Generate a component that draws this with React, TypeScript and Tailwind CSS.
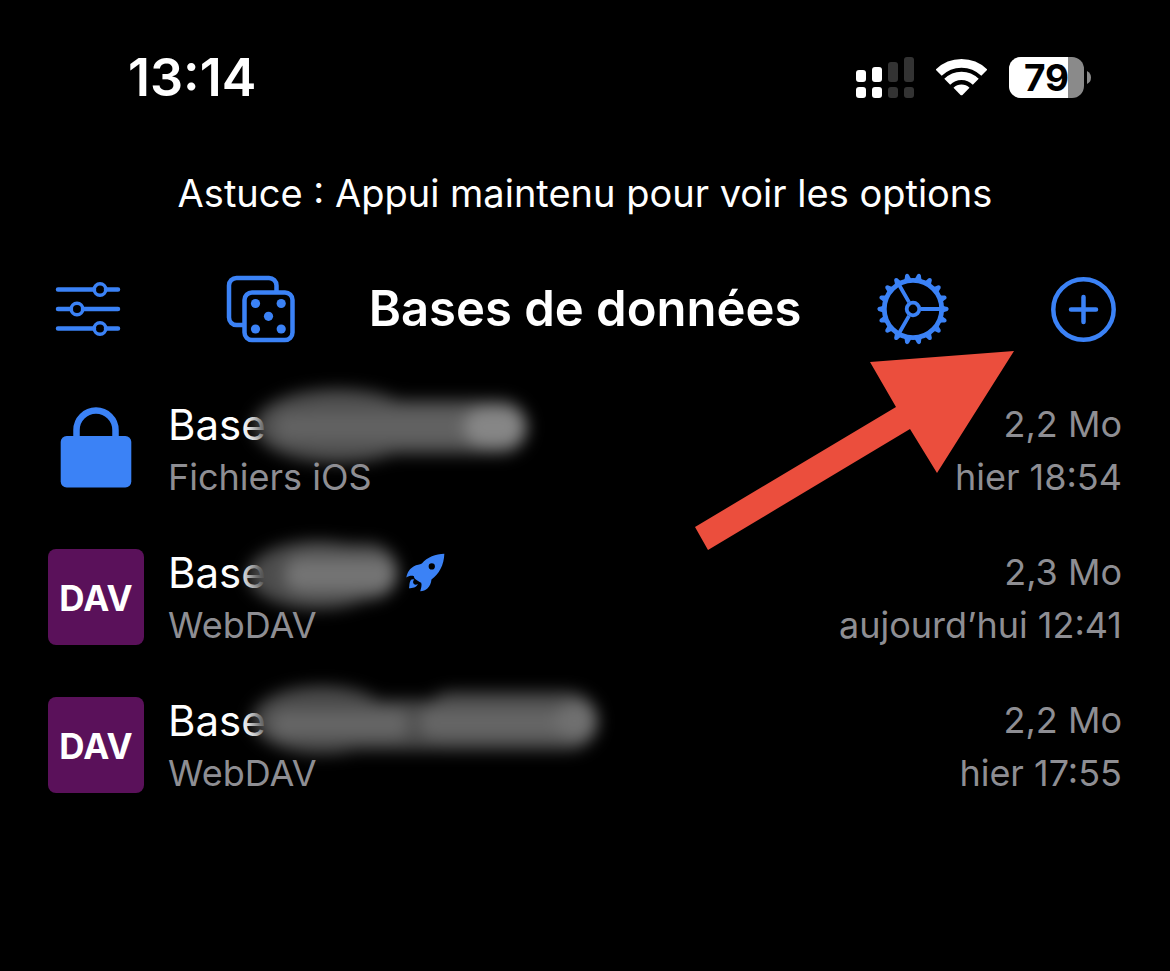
import type { ReactNode } from 'react';

// ── Data ───────────────────────────────────────────────────────────────────

interface Smudge {
  width: number;
  blobs: { cx: number; cy: number; rx: number; ry: number; fill: string }[];
}

interface Database {
  id: string;
  kind: 'local' | 'dav';
  source: string;
  size: string;
  modified: string;
  quickLaunch?: boolean;
  smudge: Smudge;
}

const DATABASES: Database[] = [
  {
    id: 'ios',
    kind: 'local',
    source: 'Fichiers iOS',
    size: '2,2 Mo',
    modified: 'hier 18:54',
    smudge: {
      width: 316,
      blobs: [
        { cx: 104, cy: 49, rx: 84, ry: 37, fill: '#4c4c4c' },
        { cx: 180, cy: 50, rx: 114, ry: 27, fill: '#505050' },
        { cx: 166, cy: 50, rx: 126, ry: 15, fill: '#626262' },
        { cx: 260, cy: 50, rx: 30, ry: 20, fill: '#868686' },
      ],
    },
  },
  {
    id: 'dav-1',
    kind: 'dav',
    source: 'WebDAV',
    size: '2,3 Mo',
    modified: 'aujourd’hui 12:41',
    quickLaunch: true,
    smudge: {
      width: 172,
      blobs: [
        { cx: 84, cy: 50, rx: 70, ry: 34, fill: '#4c4c4c' },
        { cx: 108, cy: 47, rx: 56, ry: 28, fill: '#545454' },
        { cx: 106, cy: 50, rx: 56, ry: 16, fill: '#747474' },
      ],
    },
  },
  {
    id: 'dav-2',
    kind: 'dav',
    source: 'WebDAV',
    size: '2,2 Mo',
    modified: 'hier 17:55',
    smudge: {
      width: 384,
      blobs: [
        { cx: 88, cy: 47, rx: 70, ry: 34, fill: '#4a4a4a' },
        { cx: 190, cy: 52, rx: 150, ry: 25, fill: '#4a4a4a' },
        { cx: 276, cy: 48, rx: 88, ry: 29, fill: '#4e4e4e' },
        { cx: 106, cy: 51, rx: 70, ry: 14, fill: '#666666' },
        { cx: 272, cy: 50, rx: 88, ry: 14, fill: '#666666' },
        { cx: 342, cy: 48, rx: 21, ry: 19, fill: '#707070' },
      ],
    },
  },
];

// ── Status Bar ─────────────────────────────────────────────────────────────

function SignalIcon() {
  return (
    <svg width="58" height="41" viewBox="0 0 58 41" fill="#fff" aria-hidden="true">
      <rect x="0" y="13" width="10" height="12" rx="3" />
      <rect x="16" y="10" width="10" height="15" rx="3" />
      <rect x="32" y="5" width="10" height="20" rx="3" fill="#333" />
      <rect x="48" y="0" width="10" height="25" rx="3" fill="#333" />
      <rect x="0" y="30" width="10" height="11" rx="3" />
      <rect x="16" y="30" width="10" height="11" rx="3" />
      <rect x="32" y="30" width="10" height="11" rx="3" fill="#333" />
      <rect x="48" y="30" width="10" height="11" rx="3" fill="#333" />
    </svg>
  );
}

function WifiIcon() {
  return (
    <svg width="51" height="37" viewBox="-76.5 -111 153 111" fill="none" stroke="#fff" aria-hidden="true">
      <path d="M-68.5 -70A98 98 0 0 1 68.5 -70" strokeWidth="26" />
      <path d="M-42.8 -42.8A60.5 60.5 0 0 1 42.8 -42.8" strokeWidth="25" />
      <path d="M-24 -25A35 35 0 0 1 24 -25L3 -3Q0 -1 -3 -3Z" fill="#fff" stroke="none" />
    </svg>
  );
}

function Battery({ level }: { level: number }) {
  return (
    <div className="flex items-center gap-[3px]">
      <div className="relative flex h-[41px] w-[75px] items-center justify-center rounded-xl bg-[#8a8a8a]">
        <div className="absolute inset-y-0 left-0 rounded-l-xl bg-white" style={{ width: `${level}%` }} />
        <span className="relative text-[37px] leading-none font-bold text-black">{level}</span>
      </div>
      <svg width="4" height="13" viewBox="0 0 4 13" fill="#8a8a8a" aria-hidden="true">
        <path d="M0 0Q4 2 4 6.500Q4 11 0 13Z" />
      </svg>
    </div>
  );
}

function StatusBar() {
  return (
    <div className="flex h-[154px] items-center justify-between pr-[79px] pl-[128px]">
      <time className="pt-[2px] text-[52px] font-semibold">13:14</time>
      <div className="flex items-center gap-[22px]">
        <SignalIcon />
        <WifiIcon />
        <Battery level={79} />
      </div>
    </div>
  );
}

// ── Toolbar ────────────────────────────────────────────────────────────────

function SlidersIcon() {
  return (
    <svg width="76" height="76" viewBox="0 0 76 76" fill="none" stroke="currentColor" strokeWidth="4.500" strokeLinecap="round" aria-hidden="true">
      <path d="M8 18.500H44M56 18.500H68" />
      <circle cx="50" cy="18.500" r="5.800" strokeWidth="3.500" />
      <path d="M8 38H21M33 38H68" />
      <circle cx="27" cy="38" r="5.800" strokeWidth="3.500" />
      <path d="M8 57.500H44M56 57.500H68" />
      <circle cx="50" cy="57.500" r="5.800" strokeWidth="3.500" />
    </svg>
  );
}

function DiceIcon() {
  return (
    <svg width="76" height="76" viewBox="0 0 76 76" fill="none" stroke="currentColor" strokeWidth="4.500" aria-hidden="true">
      <path d="M22 54H14.500A7.500 7.500 0 0 1 7 46.500V14.500A7.500 7.500 0 0 1 14.500 7H47A7.500 7.500 0 0 1 54.500 14.500V21" />
      <rect x="22.500" y="21.500" width="48" height="47.500" rx="7.500" />
      <g fill="currentColor" stroke="none">
        <circle cx="33.500" cy="32.500" r="4.600" />
        <circle cx="59.200" cy="32.500" r="4.600" />
        <circle cx="46.500" cy="45.300" r="4.600" />
        <circle cx="33.500" cy="58" r="4.600" />
        <circle cx="59.200" cy="58" r="4.600" />
      </g>
    </svg>
  );
}

const TEETH = Array.from({ length: 18 }, (_, i) => i * 20);

function GearIcon() {
  return (
    <svg width="76" height="76" viewBox="-38 -38 76 76" fill="none" stroke="currentColor" strokeWidth="3.800" aria-hidden="true">
      <circle r="28.700" strokeWidth="4.800" />
      <circle r="6.300" />
      <path d="M8 0H28M-4 -6.900L-14 -24.200M-4 6.900L-14 24.200" />
      {TEETH.map((angle) => (
        <path
          key={angle}
          d="M29.500 -3.800Q32 -2.500 34.500 -1.900Q36.800 0 34.500 1.900Q32 2.500 29.500 3.800Z"
          transform={`rotate(${angle})`}
          fill="currentColor"
          stroke="none"
        />
      ))}
    </svg>
  );
}

function PlusIcon() {
  return (
    <svg width="76" height="76" viewBox="0 0 76 76" fill="none" stroke="currentColor" strokeWidth="4.500" strokeLinecap="round" aria-hidden="true">
      <circle cx="37.500" cy="38.500" r="30.200" />
      <path d="M37.500 26V51M25 38.500H50" />
    </svg>
  );
}

function ToolbarButton({ label, children }: { label: string; children: ReactNode }) {
  return (
    <button type="button" aria-label={label} className="shrink-0 text-[#3b82f6]">
      {children}
    </button>
  );
}

function Toolbar() {
  return (
    <header className="mt-[39px] mb-7 grid grid-cols-[1fr_auto_1fr] items-center px-12">
      <div className="flex gap-24 pl-[2px]">
        <ToolbarButton label="Réglages">
          <SlidersIcon />
        </ToolbarButton>
        <ToolbarButton label="Générateur">
          <DiceIcon />
        </ToolbarButton>
      </div>
      <h1 className="text-[49px] leading-[76px] font-semibold whitespace-nowrap">Bases de données</h1>
      <div className="flex justify-end gap-[95px]">
        <ToolbarButton label="Préférences">
          <GearIcon />
        </ToolbarButton>
        <ToolbarButton label="Ajouter">
          <PlusIcon />
        </ToolbarButton>
      </div>
    </header>
  );
}

// ── Database List ──────────────────────────────────────────────────────────

function LockIcon() {
  return (
    <svg width="96" height="96" viewBox="0 0 96 96" fill="none" aria-hidden="true" className="text-[#3b82f6]">
      <path d="M28.500 40V29A19.500 19.500 0 0 1 67.500 29V40" stroke="currentColor" strokeWidth="6.500" />
      <rect x="12.700" y="35" width="70.600" height="51.500" rx="6" fill="currentColor" />
    </svg>
  );
}

function RocketIcon() {
  return (
    <svg width="39" height="39" viewBox="0 0 118 118" fill="currentColor" aria-hidden="true" className="relative text-[#3b82f6]">
      <path
        fillRule="evenodd"
        d="M116 2C90 3 64 12 48 32C42 35 32 36 24 40C12 47 4 57 1 74C8 69 17 68 24 70C24 80 38 84 46 90C49 98 45 108 43 116C60 114 75 104 77 80C100 64 115 36 116 2ZM78 31A9.500 9.500 0 1 1 78 50A9.500 9.500 0 1 1 78 31Z"
      />
      <path d="M15 81C9 90 11 98 9 107C20 106 31 106 36 94C31 97 26 96 24 94C20 90 21 84 25 80Q20 78 15 81Z" />
    </svg>
  );
}

function SmudgeMark({ id, smudge }: { id: string; smudge: Smudge }) {
  const [head, ...rest] = smudge.blobs;

  return (
    <svg
      width={smudge.width}
      height="96"
      viewBox={`0 0 ${smudge.width} 96`}
      aria-hidden="true"
      className="-ml-8 shrink-0 overflow-visible"
    >
      <filter id={`blur-${id}`} x="-20%" y="-50%" width="140%" height="200%" colorInterpolationFilters="sRGB">
        <feGaussianBlur stdDeviation="8" />
      </filter>
      <g filter={`url(#blur-${id})`}>
        <ellipse cx={head.cx} cy={head.cy} rx={head.rx} ry={head.ry} fill={head.fill} />
        {rest.map((b) => (
          <rect key={b.cx} x={b.cx - b.rx} y={b.cy - b.ry} width={b.rx * 2} height={b.ry * 2} rx={b.ry} fill={b.fill} />
        ))}
      </g>
    </svg>
  );
}

function DatabaseRow({ db }: { db: Database }) {
  return (
    <li className="flex h-[148px] items-center gap-6 px-12">
      {db.kind === 'local' ? (
        <LockIcon />
      ) : (
        <div className="flex size-24 shrink-0 items-center justify-center rounded-lg bg-[#5a115a] pt-[2px] text-[35px] font-bold">
          DAV
        </div>
      )}
      <div className="flex-1 pt-1">
        <div className="flex h-[53px] items-center text-[42px]">
          Base
          <SmudgeMark id={db.id} smudge={db.smudge} />
          {db.quickLaunch && <RocketIcon />}
        </div>
        <div className="text-4xl leading-[53px] text-[#8e8e93]">{db.source}</div>
      </div>
      <div className="pt-1 text-right text-4xl leading-[53px] text-[#8e8e93]">
        <div>{db.size}</div>
        <div>{db.modified}</div>
      </div>
    </li>
  );
}

// ── Page ───────────────────────────────────────────────────────────────────

export default function App() {
  return (
    <div className="relative min-h-screen bg-black font-['Inter',sans-serif] text-white">
      <StatusBar />
      <p className="text-center text-[38px] leading-[78px]">Astuce : Appui maintenu pour voir les options</p>
      <Toolbar />
      <ul>
        {DATABASES.map((db) => (
          <DatabaseRow key={db.id} db={db} />
        ))}
      </ul>

      {/* Arrow pointing at the add button */}
      <svg
        width="319"
        height="199"
        viewBox="0 0 319 199"
        fill="#eb4e3d"
        aria-hidden="true"
        className="pointer-events-none absolute top-[351px] right-[156px]"
      >
        <path d="M319 0L175 11L201 56L0 176L13 199L215 78L242 122Z" />
      </svg>
    </div>
  );
}
